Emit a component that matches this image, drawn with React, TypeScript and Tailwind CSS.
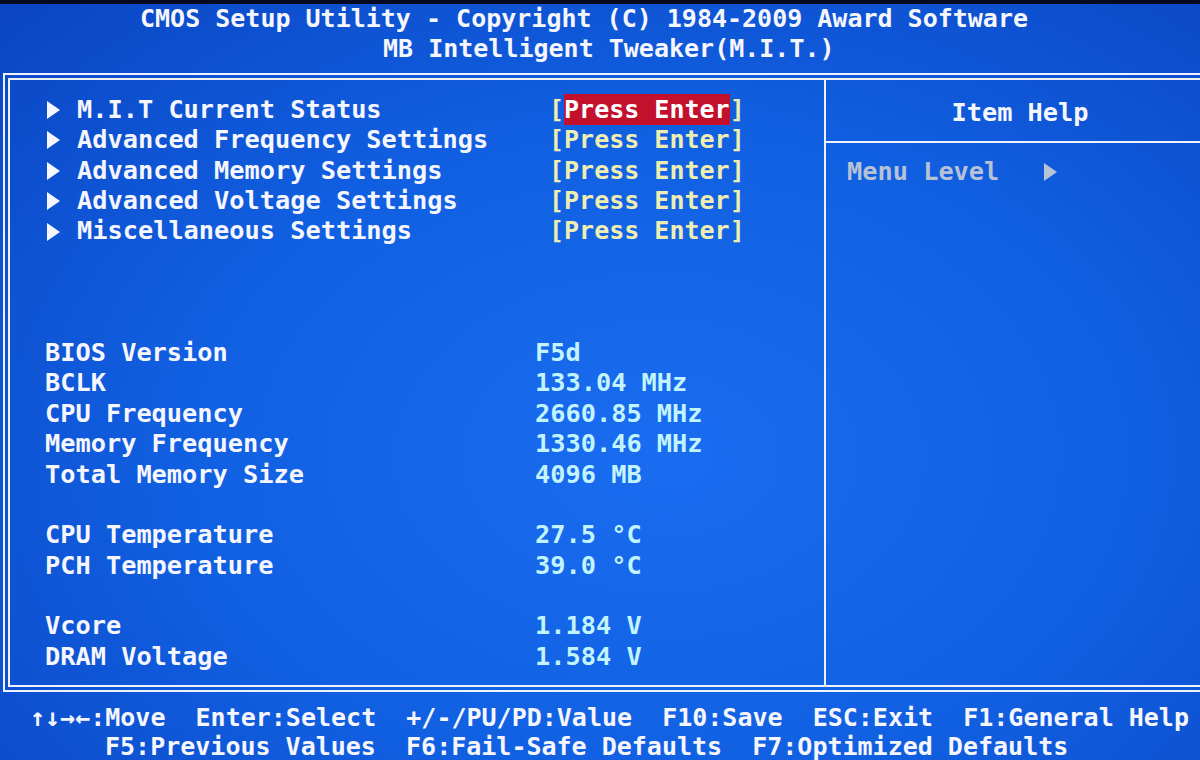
import React from "react";

const menuItems = [
  "M.I.T Current Status",
  "Advanced Frequency Settings",
  "Advanced Memory Settings",
  "Advanced Voltage Settings",
  "Miscellaneous Settings",
];

// null = blank text row
const infoRows: ([string, string] | null)[] = [
  null,
  null,
  null,
  ["BIOS Version", "F5d"],
  ["BCLK", "133.04 MHz"],
  ["CPU Frequency", "2660.85 MHz"],
  ["Memory Frequency", "1330.46 MHz"],
  ["Total Memory Size", "4096 MB"],
  null,
  ["CPU Temperature", "27.5 °C"],
  ["PCH Temperature", "39.0 °C"],
  null,
  ["Vcore", "1.184 V"],
  ["DRAM Voltage", "1.584 V"],
];

function Arrow({ className }: { className?: string }) {
  return (
    <svg width="13" height="18" viewBox="0 0 13 18" className={className}>
      <polygon points="0,0 13,9 0,18" fill="currentColor" />
    </svg>
  );
}

export default function App() {
  return (
    <div className="w-[1200px] h-[760px] overflow-hidden flex flex-col bg-[radial-gradient(ellipse_at_55%_60%,#1a6cf0_0%,#1160e2_50%,#0a45c2_100%)] font-['DejaVu_Sans_Mono',monospace] font-bold text-[25.3px] leading-[30.4px] text-[#f6f6ff]">
      <div className="h-[4px] shrink-0 bg-[#050a20]" />

      {/* title */}
      <div className="shrink-0 pl-[140px] whitespace-pre text-[25px]">CMOS Setup Utility - Copyright (C) 1984-2009 Award Software</div>
      <div className="shrink-0 pl-[383px] whitespace-pre text-[25px]">MB Intelligent Tweaker(M.I.T.)</div>

      {/* main box */}
      <div className="shrink-0 mt-[8px] ml-[3px] h-[619px] flex border-t-[7px] border-l-[7px] border-b-[7px] border-double border-[#eef2ff]">
        <div className="w-[816px] border-r-2 border-[#eef2ff] pt-[15px]">
          {menuItems.map((label, i) => (
            <div key={label} className="flex items-center h-[30.4px] whitespace-pre">
              <div className="w-[67px] pl-[37px] flex items-center">
                <Arrow />
              </div>
              <div className="w-[472px]">{label}</div>
              <div className="text-[#efeeb0] text-[25px]">
                [
                {i === 0 ? (
                  <span className="bg-[#c3112d] text-white py-[1px]">Press Enter</span>
                ) : (
                  <span>Press Enter</span>
                )}
                ]
              </div>
            </div>
          ))}
          {infoRows.map((row, i) =>
            row ? (
              <div key={i} className="flex h-[30.4px] whitespace-pre">
                <div className="w-[525px] pl-[35px]">{row[0]}</div>
                <div className="text-[#c2f4ff]">{row[1]}</div>
              </div>
            ) : (
              <div key={i} className="h-[30.4px]" />
            )
          )}
        </div>

        <div className="flex-1 flex flex-col">
          <div className="h-[63px] pt-[5px] flex items-center justify-center border-b-2 border-[#eef2ff] pl-[14px]">
            Item Help
          </div>
          <div className="pt-[14px] pl-[21px] flex items-center h-[44.4px] text-[#b6c2d6] whitespace-pre">
            <span>Menu Level</span>
            <Arrow className="ml-[45px]" />
          </div>
        </div>
      </div>

      {/* key help */}
      <div className="shrink-0 pt-[11px] leading-[29px] text-[25px]">
        <div className="pl-[30px] whitespace-pre">
          ↑↓→←:Move  Enter:Select  +/-/PU/PD:Value  F10:Save  ESC:Exit  F1:General Help
        </div>
        <div className="pl-[105px] whitespace-pre">
          F5:Previous Values  F6:Fail-Safe Defaults  F7:Optimized Defaults
        </div>
      </div>
    </div>
  );
}
